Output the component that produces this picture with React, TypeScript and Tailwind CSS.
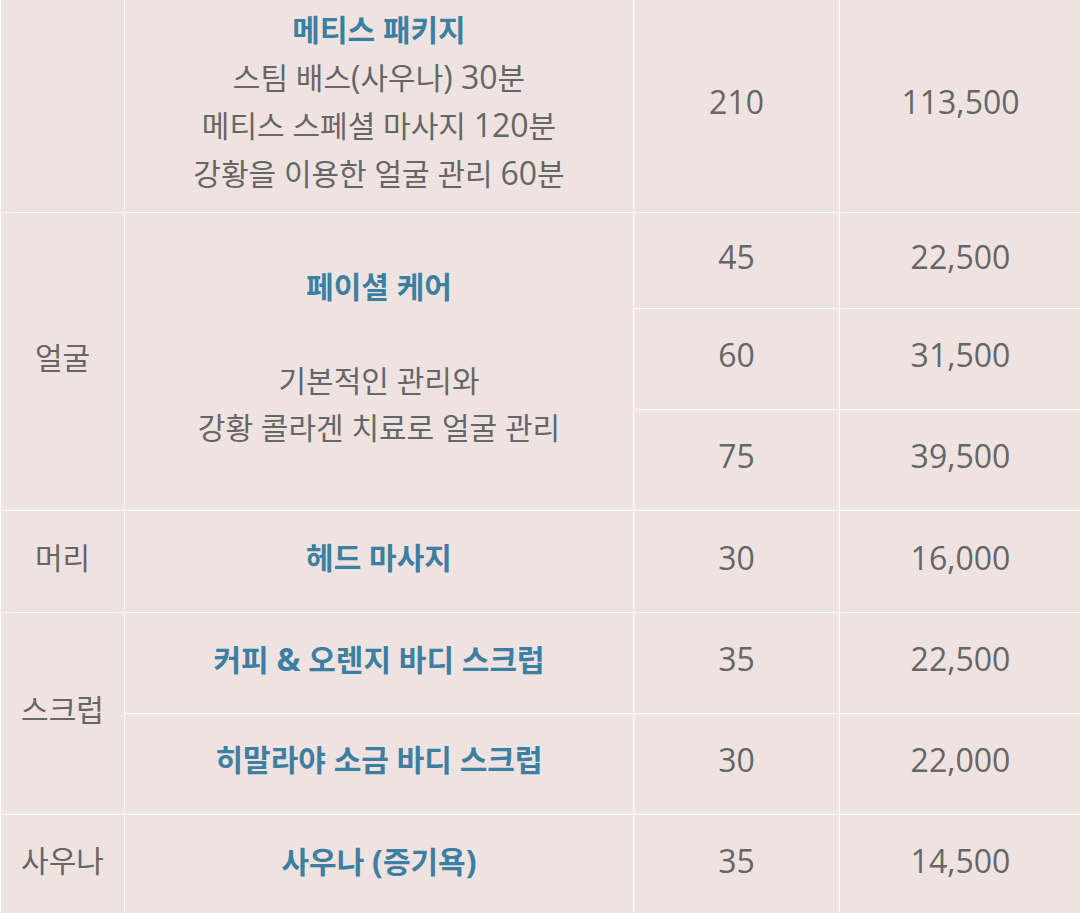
const cell = 'border border-white text-center align-middle p-0 pb-2';
const num = `${cell} text-[32px]`;
const title = 'font-bold text-[#3d7fa0]';

// latin runs come out a bit larger than the hangul in the source
const L = ({ children }: { children: React.ReactNode }) => <span className="text-[32px]">{children}</span>;

export default function App() {
  return (
    <div className="w-[1080px] h-[913px] overflow-hidden bg-[#efe3e1]">
      <table
        className="border-collapse table-fixed w-[1082px] text-[#666666] text-[30px] leading-[47px]"
        style={{ fontFamily: '"Open Sans", "Noto Sans CJK KR", sans-serif' }}
      >
        <colgroup>
          <col className="w-[124px]" />
          <col className="w-[509px]" />
          <col className="w-[206px]" />
          <col />
        </colgroup>
        <tbody>
          <tr className="h-[212px]">
            <td className={`${cell} border-t-0`}></td>
            <td className={`${cell} border-t-0`}>
              <div className={title}>메티스 패키지</div>
              <div>스팀 배스<L>(</L>사우나<L>) 30</L>분</div>
              <div>메티스 스페셜 마사지 <L>120</L>분</div>
              <div>강황을 이용한 얼굴 관리 <L>60</L>분</div>
            </td>
            <td className={`${num} border-t-0`}>210</td>
            <td className={`${num} border-t-0`}>113,500</td>
          </tr>
          <tr className="h-[96px]">
            <td className={cell} rowSpan={3}>얼굴</td>
            <td className={cell} rowSpan={3}>
              <div className={title}>페이셜 케어</div>
              <div>&nbsp;</div>
              <div>기본적인 관리와</div>
              <div>강황 콜라겐 치료로 얼굴 관리</div>
            </td>
            <td className={num}>45</td>
            <td className={num}>22,500</td>
          </tr>
          <tr className="h-[101px]">
            <td className={num}>60</td>
            <td className={num}>31,500</td>
          </tr>
          <tr className="h-[101px]">
            <td className={num}>75</td>
            <td className={num}>39,500</td>
          </tr>
          <tr className="h-[102px]">
            <td className={cell}>머리</td>
            <td className={`${cell} ${title}`}>헤드 마사지</td>
            <td className={num}>30</td>
            <td className={num}>16,000</td>
          </tr>
          <tr className="h-[101px]">
            <td className={cell} rowSpan={2}>스크럽</td>
            <td className={`${cell} ${title}`}>커피 <L>&amp;</L> 오렌지 바디 스크럽</td>
            <td className={num}>35</td>
            <td className={num}>22,500</td>
          </tr>
          <tr className="h-[101px]">
            <td className={`${cell} ${title}`}>히말라야 소금 바디 스크럽</td>
            <td className={num}>30</td>
            <td className={num}>22,000</td>
          </tr>
          <tr className="h-[101px]">
            <td className={cell}>사우나</td>
            <td className={`${cell} ${title}`}>사우나 <L>(</L>증기욕<L>)</L></td>
            <td className={num}>35</td>
            <td className={num}>14,500</td>
          </tr>
        </tbody>
      </table>
    </div>
  );
}
